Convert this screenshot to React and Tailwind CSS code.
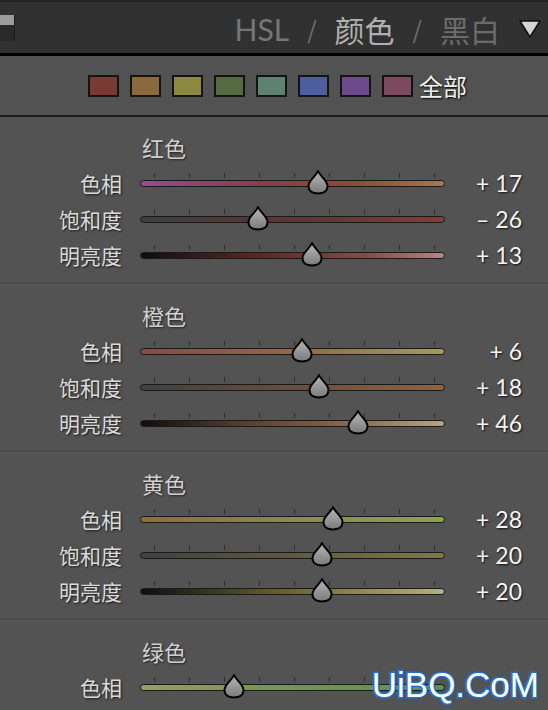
import React from "react";

const swatches = ["#7a3a32", "#8a6a3c", "#8c8840", "#566a42", "#5c8272", "#4c5ea0", "#6c4a8c", "#7c4a5c"];

const sections = [
  {
    name: "红色",
    rows: [
      { label: "色相", value: 17, track: "bg-[linear-gradient(90deg,#9a4a8a,#8d3a4c_40%,#8a4a3a_70%,#a07a52)]" },
      { label: "饱和度", value: -26, track: "bg-[linear-gradient(90deg,#3e3e3e,#5a3636_50%,#8c3838)]" },
      { label: "明亮度", value: 13, track: "bg-[linear-gradient(90deg,#0e0e0e,#5a2a2a_40%,#8a4a4a_75%,#b48484)]" },
    ],
  },
  {
    name: "橙色",
    rows: [
      { label: "色相", value: 6, track: "bg-[linear-gradient(90deg,#8a4848,#8a6a50_50%,#a09c5a)]" },
      { label: "饱和度", value: 18, track: "bg-[linear-gradient(90deg,#404040,#6a5040_55%,#8e6444)]" },
      { label: "明亮度", value: 46, track: "bg-[linear-gradient(90deg,#0e0e0e,#5a4030_35%,#8a6a50_70%,#b4a484)]" },
    ],
  },
  {
    name: "黄色",
    rows: [
      { label: "色相", value: 28, track: "bg-[linear-gradient(90deg,#8c6c42,#8a8a52_50%,#8ea052)]" },
      { label: "饱和度", value: 20, track: "bg-[linear-gradient(90deg,#404040,#5e5a40_50%,#807848)]" },
      { label: "明亮度", value: 20, track: "bg-[linear-gradient(90deg,#0e0e0e,#5a5530_40%,#8a8458_70%,#b4ae84)]" },
    ],
  },
  {
    name: "绿色",
    rows: [
      { label: "色相", value: -43, track: "bg-[linear-gradient(90deg,#9c9c5a,#7a9452_40%,#5e9252)]" },
    ],
  },
];

const formatValue = v => (v < 0 ? `– ${-v}` : `+ ${v}`);

const Thumb = () => (
  <svg width="22" height="25" viewBox="0 0 22 25">
    <defs>
      <linearGradient id="thumbFill" x1="0" y1="0" x2="0" y2="1">
        <stop offset="0" stopColor="#b8b8b8" />
        <stop offset="1" stopColor="#7a7a7a" />
      </linearGradient>
    </defs>
    <path
      d="M11 1 C13 6.5 20.5 10 20.5 16 C20.5 21 16.5 23.5 11 23.5 C5.5 23.5 1.5 21 1.5 16 C1.5 10 9 6.5 11 1 Z"
      fill="url(#thumbFill)"
      stroke="#000"
      strokeWidth="2"
      strokeLinejoin="round"
    />
  </svg>
);

const Slider = ({ value, track }) => {
  // track spans 305px, ticks from 14px to 294px, 0 sits at 154px
  const x = 154 + value * 1.4;
  return (
    <div className="relative w-[305px] h-[36px]">
      {[0, 1, 2, 3, 4, 5, 6, 7, 8].map(i => (
        <div key={i} className="absolute top-[8px] w-px h-[5px] bg-[#303030]" style={{ left: 14 + i * 35 }} />
      ))}
      <div className={`absolute left-0 right-0 top-[15px] h-[7px] rounded-full border border-[#1a1a1a] ${track}`} />
      <div className="absolute top-[5px]" style={{ left: x - 11 }}>
        <Thumb />
      </div>
    </div>
  );
};

const App = () => {
  return (
    <div
      className="relative w-[548px] h-[710px] overflow-hidden bg-[#535353]"
      style={{ fontFamily: "'Noto Sans CJK SC', 'Noto Sans', sans-serif" }}
    >
      {/* Header */}
      <div className="h-[53px] bg-[#313131] border-t-2 border-[#242424] flex items-center justify-between pr-[6px]">
        <div className="flex flex-col w-[15px] border-r border-[#1e1e1e]">
          <div className="h-[10px] bg-[#9c9c9c]" />
          <div className="h-[16px] bg-[#2a2a2a]" />
        </div>
        <div className="flex items-center gap-[18px] text-[30px] leading-none pt-[2px]">
          <span className="text-[#767676]" style={{ fontFamily: "Lato, 'Noto Sans', sans-serif" }}>HSL</span>
          <span className="text-[#6e6e6e] text-[24px]">/</span>
          <span className="text-[#b0b0b0]">颜色</span>
          <span className="text-[#6e6e6e] text-[24px]">/</span>
          <span className="text-[#6c6c6c]">黑白</span>
          <svg width="24" height="20" viewBox="0 0 24 20">
            <polygon points="2,2 22,2 12,18" fill="#d4d4d4" stroke="#111" strokeWidth="1.5" strokeLinejoin="round" />
          </svg>
        </div>
      </div>
      <div className="h-[3px] bg-black" />

      {/* Swatches */}
      <div className="h-[59px] bg-[#525252] flex items-center pl-[88px]">
        <div className="flex items-center gap-[11px]">
          {swatches.map(c => (
            <div key={c} className="w-[31px] h-[22px] border-2 border-[#141414]" style={{ background: c }} />
          ))}
        </div>
        <span className="ml-[6px] text-[24px] leading-none text-[#f0f0f0] [text-shadow:1px_1px_2px_#000]">全部</span>
      </div>
      <div className="h-[2px] bg-[#1c1c1c]" />

      {/* Sections */}
      {sections.map(section => (
        <div key={section.name}>
          <div className="pt-[12px] pb-[10px]">
            <div className="h-[36px] flex items-center pl-[142px] text-[22px] leading-none text-[#cfcfcf] [text-shadow:1px_1px_2px_#222]">
              {section.name}
            </div>
            {section.rows.map(row => (
              <div key={row.label} className="h-[36px] flex items-center">
                <div className="w-[122px] text-right text-[21px] leading-none text-[#dadada] [text-shadow:1px_1px_2px_#1a1a1a]">
                  {row.label}
                </div>
                <div className="ml-[18px]">
                  <Slider value={row.value} track={row.track} />
                </div>
                <div
                  className="w-[77px] text-right text-[23px] leading-none text-[#f4f4f4] [text-shadow:1px_1px_2px_#111]"
                  style={{ fontFamily: "Lato, 'Noto Sans', sans-serif" }}
                >
                  {section.name === "绿色" ? "" : formatValue(row.value)}
                </div>
              </div>
            ))}
          </div>
          <div className="h-px bg-[#444444]" />
          <div className="h-px bg-[#5c5c5c]" />
        </div>
      ))}

      {/* watermark */}
      <div
        className="absolute right-[9px] bottom-[8px] text-[35px] leading-none text-white [-webkit-text-stroke:3px_#1d6fd6] [paint-order:stroke_fill]"
        style={{ fontFamily: "'Liberation Sans', Arial, sans-serif" }}
      >
        UiBQ.CoM
      </div>
    </div>
  );
};

export default App;
